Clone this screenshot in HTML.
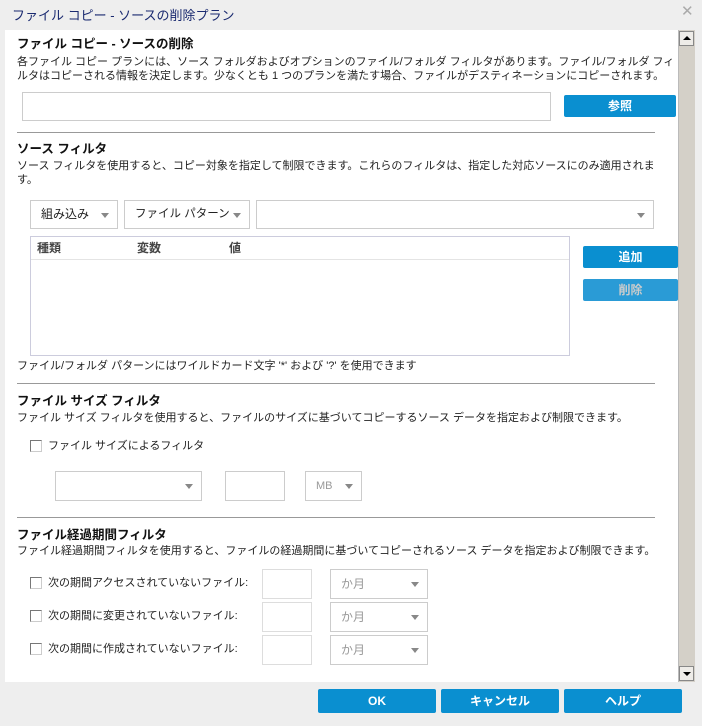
<!DOCTYPE html>
<html><head><meta charset="utf-8"><style>
*{box-sizing:border-box;margin:0;padding:0}
body{width:702px;height:726px;background:#eeeeee;position:relative;overflow:hidden;font-family:"Liberation Sans","Noto Sans CJK JP",sans-serif;font-size:12px;color:#222}
.a{position:absolute;white-space:nowrap;line-height:14px}
.d{font-size:11px}
.b{font-weight:bold;font-size:12.5px;color:#111}
.box{position:absolute;border:1px solid #ccc;background:#fff}
.hr{position:absolute;left:17px;width:638px;height:1px;background:#999}
.btn{position:absolute;background:#0a8fd0;color:#fff;font-weight:bold;text-align:center;font-size:12px;border-radius:2px}
.arr{position:absolute;right:8px;top:50%;margin-top:-2px;width:0;height:0;border-left:4px solid transparent;border-right:4px solid transparent;border-top:5px solid #888}
.cb{position:absolute;width:12px;height:12px;border:1px solid #777;border-right-color:#ccc;border-bottom-color:#ccc;background:#fff}
.sel{position:absolute;border:1px solid #ccc;background:#fff;color:#999;padding-left:10px}
</style></head><body>
<div class="a" style="left:12px;top:8px;font-size:13px;color:#1a2a70;line-height:16px">ファイル コピー - ソースの削除プラン</div>
<div class="a" style="left:681px;top:5px;font-size:15px;color:#aaa">✕</div>
<div style="position:absolute;left:5px;top:30px;width:673px;height:652px;background:#fff"></div>
<div style="position:absolute;left:678px;top:30px;width:17px;height:652px;background:#d4d0c8;border-left:1px solid #bbb"></div>
<div style="position:absolute;left:679px;top:31px;width:15px;height:15px;background:#eeece8;border:1px solid #888"></div>
<div style="position:absolute;left:683px;top:36px;border-left:4px solid transparent;border-right:4px solid transparent;border-bottom:4px solid #000"></div>
<div style="position:absolute;left:679px;top:666px;width:15px;height:15px;background:#eeece8;border:1px solid #888"></div>
<div style="position:absolute;left:683px;top:672px;border-left:4px solid transparent;border-right:4px solid transparent;border-top:4px solid #000"></div>

<div class="a b" style="left:17px;top:37px">ファイル コピー - ソースの削除</div>
<div class="a d" style="left:17px;top:55px">各ファイル コピー プランには、ソース フォルダおよびオプションのファイル/フォルダ フィルタがあります。ファイル/フォルダ フィ</div>
<div class="a d" style="left:17px;top:69px">ルタはコピーされる情報を決定します。少なくとも 1 つのプランを満たす場合、ファイルがデスティネーションにコピーされます。</div>
<div class="box" style="left:22px;top:92px;width:529px;height:29px"></div>
<div class="btn" style="left:564px;top:95px;width:112px;height:22px;line-height:22px">参照</div>
<div class="hr" style="top:132px"></div>

<div class="a b" style="left:17px;top:142px">ソース フィルタ</div>
<div class="a d" style="left:17px;top:159px">ソース フィルタを使用すると、コピー対象を指定して制限できます。これらのフィルタは、指定した対応ソースにのみ適用されま</div>
<div class="a d" style="left:17px;top:173px">す。</div>
<div class="sel" style="left:30px;top:200px;width:88px;height:29px;line-height:27px;color:#222">組み込み<span class="arr"></span></div>
<div class="sel" style="left:124px;top:200px;width:126px;height:29px;line-height:27px;color:#222;font-size:11.5px">ファイル パターン<span class="arr"></span></div>
<div class="sel" style="left:256px;top:200px;width:398px;height:29px"><span class="arr"></span></div>
<div class="box" style="left:30px;top:236px;width:540px;height:120px;border-color:#ccd"></div>
<div style="position:absolute;left:31px;top:259px;width:538px;height:1px;background:#e4e4e4"></div>
<div class="a" style="left:37px;top:241px;font-weight:bold;color:#444">種類</div>
<div class="a" style="left:137px;top:241px;font-weight:bold;color:#444">変数</div>
<div class="a" style="left:229px;top:241px;font-weight:bold;color:#444">値</div>
<div class="btn" style="left:583px;top:246px;width:95px;height:22px;line-height:22px">追加</div>
<div class="btn" style="left:583px;top:279px;width:95px;height:22px;line-height:22px;background:#2a9bd6;color:#ccc">削除</div>
<div class="a d" style="left:17px;top:359px">ファイル/フォルダ パターンにはワイルドカード文字 '*' および '?' を使用できます</div>
<div class="hr" style="top:383px"></div>

<div class="a b" style="left:17px;top:394px">ファイル サイズ フィルタ</div>
<div class="a d" style="left:17px;top:411px">ファイル サイズ フィルタを使用すると、ファイルのサイズに基づいてコピーするソース データを指定および制限できます。</div>
<div class="cb" style="left:30px;top:440px"></div>
<div class="a d" style="left:48px;top:439px">ファイル サイズによるフィルタ</div>
<div class="sel" style="left:55px;top:471px;width:147px;height:30px"><span class="arr"></span></div>
<div class="box" style="left:225px;top:471px;width:60px;height:30px"></div>
<div class="sel" style="left:305px;top:471px;width:57px;height:30px;line-height:28px;font-size:11px">MB<span class="arr"></span></div>
<div class="hr" style="top:517px"></div>

<div class="a b" style="left:17px;top:528px">ファイル経過期間フィルタ</div>
<div class="a d" style="left:17px;top:544px">ファイル経過期間フィルタを使用すると、ファイルの経過期間に基づいてコピーされるソース データを指定および制限できます。</div>

<div class="cb" style="left:30px;top:577px"></div>
<div class="a d" style="left:48px;top:576px">次の期間アクセスされていないファイル:</div>
<div class="box" style="left:262px;top:569px;width:50px;height:30px;border-color:#ddd"></div>
<div class="sel" style="left:330px;top:569px;width:98px;height:30px;line-height:28px">か月<span class="arr"></span></div>

<div class="cb" style="left:30px;top:610px"></div>
<div class="a d" style="left:48px;top:609px">次の期間に変更されていないファイル:</div>
<div class="box" style="left:262px;top:602px;width:50px;height:30px;border-color:#ddd"></div>
<div class="sel" style="left:330px;top:602px;width:98px;height:30px;line-height:28px">か月<span class="arr"></span></div>

<div class="cb" style="left:30px;top:643px"></div>
<div class="a d" style="left:48px;top:642px">次の期間に作成されていないファイル:</div>
<div class="box" style="left:262px;top:635px;width:50px;height:30px;border-color:#ddd"></div>
<div class="sel" style="left:330px;top:635px;width:98px;height:30px;line-height:28px">か月<span class="arr"></span></div>

<div class="btn" style="left:318px;top:689px;width:118px;height:24px;line-height:24px">OK</div>
<div class="btn" style="left:441px;top:689px;width:118px;height:24px;line-height:24px">キャンセル</div>
<div class="btn" style="left:564px;top:689px;width:118px;height:24px;line-height:24px">ヘルプ</div>
</body></html>
